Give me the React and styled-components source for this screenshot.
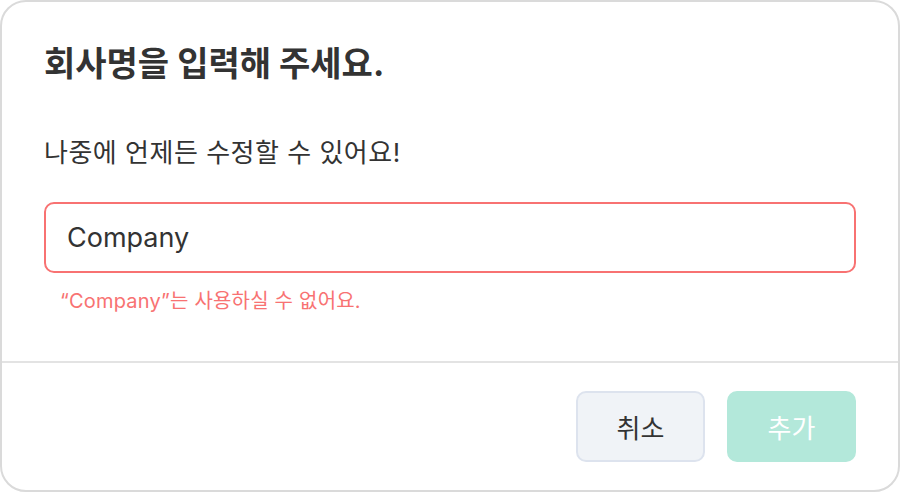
import styled, { createGlobalStyle } from "styled-components";

const GlobalStyle = createGlobalStyle`
  html, body {
    margin: 0;
    padding: 0;
    background: #ffffff;
  }
  * {
    box-sizing: border-box;
  }
`;

const Dialog = styled.div`
  width: 900px;
  height: 492px;
  border: 2px solid #dadada;
  border-radius: 26px;
  background: #fff;
  display: flex;
  flex-direction: column;
  font-family: Inter, "Noto Sans CJK KR", sans-serif;
  overflow: hidden;
`;

const Body = styled.div`
  padding: 38px 42px 0;
  flex: 1;
  display: flex;
  flex-direction: column;
`;

const Title = styled.h2`
  margin: 0;
  font-size: 34px;
  line-height: 48px;
  font-weight: 700;
  color: #333;
`;

const Subtitle = styled.p`
  margin: 47px 0 0;
  font-size: 26px;
  line-height: 36px;
  color: #333;
  letter-spacing: 0.5px;
`;

const Field = styled.div`
  margin-top: 31px;
  height: 71px;
  border: 2px solid ${(p) => (p.$error ? "#f87272" : "#dde3ee")};
  border-radius: 10px;
  display: flex;
  align-items: center;
  padding: 0 21px;
`;

const Input = styled.input`
  border: none;
  outline: none;
  width: 100%;
  font-family: inherit;
  font-size: 27px;
  color: #333;
  background: transparent;
  padding: 0;
`;

const ErrorText = styled.p`
  margin: 14px 0 0 16px;
  font-size: 20px;
  line-height: 28px;
  color: #f87272;
  letter-spacing: 0.2px;
`;

const Footer = styled.div`
  border-top: 2px solid #e3e3e3;
  height: 129px;
  flex-shrink: 0;
  display: flex;
  justify-content: flex-end;
  align-items: flex-start;
  gap: 22px;
  padding: 28px 42px 0;
`;

const Button = styled.button`
  width: 129px;
  height: 71px;
  border-radius: 10px;
  font-family: inherit;
  font-size: 26px;
  cursor: pointer;
  border: 2px solid ${(p) => (p.$primary ? "#b3e8da" : "#dde3ee")};
  background: ${(p) => (p.$primary ? "#b3e8da" : "#f0f3f7")};
  color: ${(p) => (p.$primary ? "#ffffff" : "#333")};
`;

export default function App() {
  return (
    <>
      <GlobalStyle />
      <Dialog>
        <Body>
          <Title>회사명을 입력해 주세요.</Title>
          <Subtitle>나중에 언제든 수정할 수 있어요!</Subtitle>
          <Field $error>
            <Input defaultValue="Company" />
          </Field>
          <ErrorText>“Company”는 사용하실 수 없어요.</ErrorText>
        </Body>
        <Footer>
          <Button>취소</Button>
          <Button $primary disabled>
            추가
          </Button>
        </Footer>
      </Dialog>
    </>
  );
}
